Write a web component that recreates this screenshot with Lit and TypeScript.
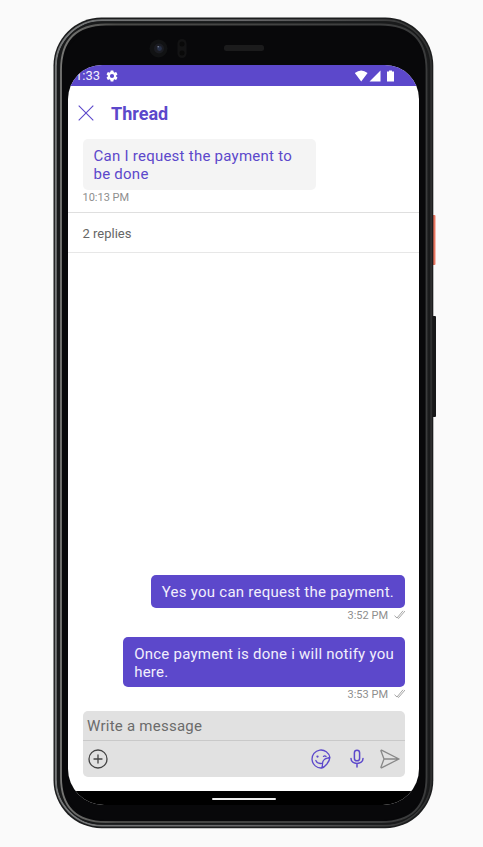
import { LitElement, html, css, svg } from "lit";
import { customElement, property } from "lit/decorators.js";

const ticks = svg`<path d="M.5 5.7 3 8 9 .8M3.6 7.8 4.6 8.4 11 1"/>`;

@customElement("chat-message")
class ChatMessage extends LitElement {
  @property() time = "";
  @property({ type: Boolean, reflect: true }) own = false;
  static styles = css`
    :host { display: flex; flex-direction: column; align-items: flex-start; }
    :host([own]) { align-items: flex-end; }
    .bubble {
      box-sizing: border-box; padding: 8px 11px 6.5px; border-radius: 5px;
      background: #f4f4f4; color: #5c48cb; font-size: 15px; line-height: 18px;
      letter-spacing: 0.25px; white-space: pre;
    }
    :host(:not([own])) .bubble { width: 233px; }
    :host([own]) .bubble { background: #5c48cb; color: #f2effc; }
    .meta {
      display: flex; align-items: center; height: 16px; gap: 6px;
      font-size: 11px; line-height: 16px; color: #8e8e8e;
    }
    svg { width: 11px; height: 9px; margin-top: -3px; fill: none; stroke: #8e8e8e; stroke-width: .8; }
  `;
  render() {
    return html`<div class="bubble"><slot></slot></div>
      <div class="meta"><span>${this.time}</span>${this.own ? html`<svg viewBox="0 0 11 9">${ticks}</svg>` : ""}</div>`;
  }
}

@customElement("app-root")
class AppRoot extends LitElement {
  static styles = css`
    :host {
      display: block; position: relative; box-sizing: border-box; width: 483px; height: 847px;
      padding: 65px 64px 0 68px; background: #fafafa; overflow: hidden;
      font-family: Roboto, "Liberation Sans", sans-serif;
    }
    .phone { position: absolute; left: 0; top: 0; width: 483px; height: 847px; }
    .screen {
      position: relative; display: flex; flex-direction: column; width: 351px; height: 740px;
      border-radius: 34px 34px 36px 36px; background: #fff; overflow: hidden;
    }
    .status {
      display: flex; align-items: center; height: 21px; flex: none; box-sizing: border-box;
      padding: 0 25px 0 7px; background: #5c48cb; color: #f2effc; font-size: 13px;
    }
    .status svg { fill: #fff; }
    .gear { width: 14px; height: 14px; margin-left: 5px; }
    .signals { width: 40px; height: 14px; margin-left: auto; }
    header { display: flex; align-items: center; height: 53px; flex: none; padding-left: 10px; gap: 17px; }
    header svg { width: 16px; height: 16px; fill: none; stroke: #5c48cb; stroke-width: 1.1; }
    h1 { margin: 0; font-size: 18px; line-height: 24px; font-weight: 700; color: #5c48cb; padding-top: 3px; }
    .parent { height: 74px; box-sizing: border-box; padding-left: 14.5px; flex: none; border-bottom: 1px solid #dfdfdf; }
    .replies {
      height: 40px; box-sizing: border-box; flex: none; padding-left: 14.5px; line-height: 41px;
      border-bottom: 1px solid #e7e7e7; font-size: 13px; color: #666;
    }
    .thread { flex: 1; display: flex; flex-direction: column; justify-content: flex-end; gap: 13px; padding: 0 14px 8px 0; }
    .composer {
      display: flex; flex-direction: column; flex: none; height: 66px; margin: 0 14px 14px 15px;
      border-radius: 5px; background: #e1e1e1;
    }
    .field { height: 29px; border-bottom: 1px solid #c9c9c9; padding-left: 4px; line-height: 31px; font-size: 15px; letter-spacing: .25px; color: #6b6b6b; }
    .tools { display: flex; align-items: center; flex: 1; padding: 0 5px; }
    .tools svg { width: 20px; height: 20px; fill: none; stroke: #5c48cb; stroke-width: 1.3; stroke-linecap: round; stroke-linejoin: round; }
    .tools .add { stroke: #444; margin-right: auto; }
    .tools .mic { margin: 0 13px 0 16px; stroke-width: 1.5; }
    .tools .send { stroke: #888; }
    .nav { display: flex; justify-content: center; flex: none; height: 14px; background: #000; }
    .pill { width: 64px; height: 2px; margin-top: 7px; border-radius: 1px; background: #eee; }
  `;

  phone() {
    return html`<svg class="phone" viewBox="0 0 483 847">
      <defs>
        <linearGradient id="rim" x1="0" x2="1">
          <stop offset="0" stop-color="#77797a" /><stop offset=".5" stop-color="#68686a" /><stop offset="1" stop-color="#303131" />
        </linearGradient>
        <linearGradient id="inner" x1="0" x2="1">
          <stop offset="0" stop-color="#777775" /><stop offset=".15" stop-color="#4a4a48" /><stop offset="1" stop-color="#3a3b3c" />
        </linearGradient>
        <linearGradient id="power" x1="0" x2="1"><stop offset="0" stop-color="#b55444" /><stop offset="1" stop-color="#f47f69" /></linearGradient>
      </defs>
      <rect x="431" y="215" width="4.5" height="50" rx="1" fill="url(#power)" />
      <rect x="431" y="316" width="5" height="101" rx="1" fill="#171819" />
      <rect x="53.5" y="17.6" width="379.8" height="810.6" rx="48" fill="#1b1c1d" />
      <rect x="55.9" y="20.2" width="375" height="805.4" rx="46" fill="none" stroke="url(#rim)" stroke-width="2" />
      <rect x="57.6" y="22" width="372" height="802" rx="44.5" fill="none" stroke="#191a1b" stroke-width="1.4" />
      <path d="M61 420V70Q61 25 106 24.5H380Q426.5 24.5 426.5 70V777Q426.5 822 381 822H106Q61 822 61 777Z" fill="#08080a" stroke="url(#inner)" stroke-width="1.8" />
      <rect x="63" y="27" width="362" height="793" rx="41" fill="#08080a" />
      <circle cx="158.5" cy="48.5" r="9" fill="#111213" />
      <circle cx="159" cy="48.5" r="5" fill="#1b1c22" />
      <circle cx="159.5" cy="48.5" r="2.4" fill="#273047" />
      <circle cx="158.2" cy="46.8" r=".8" fill="#7d859b" />
      <rect x="177.5" y="39" width="9" height="19" rx="4.5" fill="#131314" />
      <circle cx="182" cy="44" r="2.5" fill="#090909" /><circle cx="182" cy="53" r="2.5" fill="#090909" />
      <rect x="224" y="45" width="40" height="6" rx="2.5" fill="#1b1b1c" />
    </svg>`;
  }

  render() {
    return html`${this.phone()}
      <div class="screen">
        <div class="status"><span>1:33</span>
          <svg class="gear" viewBox="0 0 24 24"><path d="M19.14 12.94c.04-.3.06-.61.06-.94 0-.32-.02-.64-.07-.94l2.03-1.58a.49.49 0 0 0 .12-.61l-1.92-3.32a.49.49 0 0 0-.59-.22l-2.39.96c-.5-.38-1.03-.7-1.62-.94l-.36-2.54a.48.48 0 0 0-.48-.41h-3.84a.47.47 0 0 0-.47.41l-.36 2.54c-.59.24-1.13.57-1.62.94l-2.39-.96a.48.48 0 0 0-.59.22L2.74 8.87a.47.47 0 0 0 .12.61l2.03 1.58c-.05.3-.09.63-.09.94s.02.64.07.94l-2.03 1.58a.49.49 0 0 0-.12.61l1.92 3.32c.12.22.37.29.59.22l2.39-.96c.5.38 1.03.7 1.62.94l.36 2.54c.05.24.24.41.48.41h3.84c.24 0 .44-.17.47-.41l.36-2.54c.59-.24 1.13-.56 1.62-.94l2.39.96c.22.08.47 0 .59-.22l1.92-3.32a.47.47 0 0 0-.12-.61zM12 15.6A3.6 3.6 0 1 1 12 8.4a3.6 3.6 0 0 1 0 7.2z"/></svg>
          <svg class="signals" viewBox="0 0 40 14"><path d="M.8 4Q7.2-1 13.6 4L7.2 12.5ZM15.5 12.5 26.5 1.5V12.5ZM33 2.5H35V1.5H38V2.5H40V12.6H33Z"/></svg>
        </div>
        <header><svg viewBox="0 0 16 16"><path d="M.7.7 15.3 15.3M15.3.7.7 15.3"/></svg><h1>Thread</h1></header>
        <div class="parent"><chat-message time="10:13 PM">Can I request the payment to
be done</chat-message></div>
        <div class="replies">2 replies</div>
        <div class="thread">
          <chat-message own time="3:52 PM">Yes you can request the payment.</chat-message>
          <chat-message own time="3:53 PM">Once payment is done i will notify you
here.</chat-message>
        </div>
        <div class="composer">
          <div class="field">Write a message</div>
          <div class="tools">
            <svg class="add" viewBox="0 0 20 20"><circle cx="10" cy="10" r="9"/><path d="M10 6V14M6 10H14"/></svg>
            <svg viewBox="0 0 20 20"><path d="M18.9 8.4A9 9 0 1 0 10.6 19C13.5 18.5 18.6 13 18.9 8.4ZM18.9 8.4C17 9.5 14.5 9 12.7 11.1 10.4 13.6 12.5 16 10.6 19M4.8 11.5C5.7 13.8 8 14.8 10.6 14.4M12.5 7.4Q13.8 6.2 15 7.5"/><circle cx="6.5" cy="7.6" r=".5"/></svg>
            <svg class="mic" viewBox="0 0 20 20"><rect x="7.4" y="1.2" width="5.2" height="10.6" rx="2.6"/><path d="M4 9.5C4 16 16 16 16 9.5M10 14.5V18"/></svg>
            <svg class="send" viewBox="0 0 20 20"><path d="M1.5 1.2 19 10 1.5 18.8Q.8 19 1 18L4 10 1 2Q.8 1 1.5 1.2ZM4 10H19"/></svg>
          </div>
        </div>
        <div class="nav"><div class="pill"></div></div>
      </div>`;
  }
}
